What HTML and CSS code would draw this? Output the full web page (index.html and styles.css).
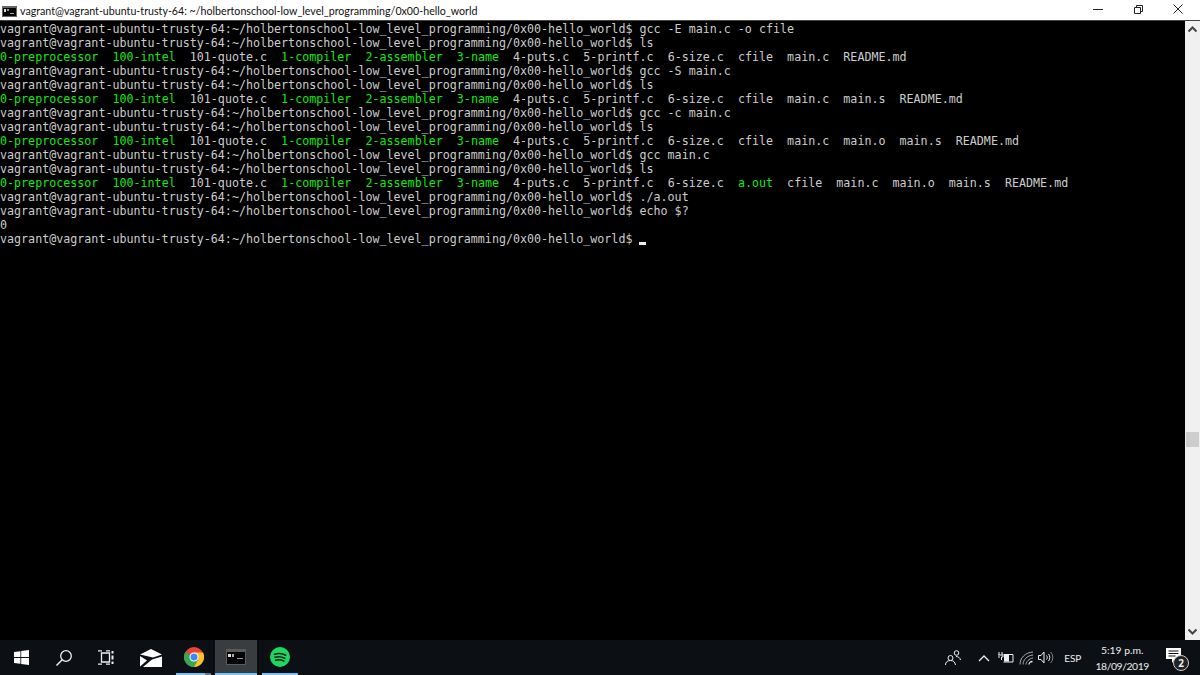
FILE: index.html
```html
<!DOCTYPE html>
<html lang="en">
<head>
<meta charset="utf-8">
<title>Terminal</title>
<link rel="stylesheet" href="styles.css">
</head>
<body>
<div class="screen">
  <header class="titlebar">
    <svg class="app-icon" width="15" height="11" viewBox="0 0 15 11"><rect width="15" height="11" fill="#666"/><rect x="1" y="2" width="13" height="8" fill="#050505"/><rect x="2" y="3" width="2" height="3" fill="#ddd"/><rect x="5" y="3" width="2" height="2" fill="#999"/><rect x="8" y="7" width="4" height="1" fill="#aaa"/></svg>
    <span class="title">vagrant@vagrant-ubuntu-trusty-64: ~/holbertonschool-low_level_programming/0x00-hello_world</span>
    <div class="controls">
      <svg class="ctl" width="40" height="20" viewBox="0 0 40 20"><path d="M15 9.500h10" stroke="#222" fill="none"/></svg>
      <svg class="ctl" width="40" height="20" viewBox="0 0 40 20"><path d="M16.500 7.500h6v6h-6zM18.500 7.500v-2h6v6h-2" stroke="#222" fill="none"/></svg>
      <svg class="ctl" width="40" height="20" viewBox="0 0 40 20"><path d="M15.500 4.500l9 9M24.500 4.500l-9 9" stroke="#222" fill="none"/></svg>
    </div>
  </header>
  <main class="console">
<pre class="term">vagrant@vagrant-ubuntu-trusty-64:~/holbertonschool-low_level_programming/0x00-hello_world$ gcc -E main.c -o cfile
vagrant@vagrant-ubuntu-trusty-64:~/holbertonschool-low_level_programming/0x00-hello_world$ ls
<span class="x">0-preprocessor</span>  <span class="x">100-intel</span>  101-quote.c  <span class="x">1-compiler</span>  <span class="x">2-assembler</span>  <span class="x">3-name</span>  4-puts.c  5-printf.c  6-size.c  cfile  main.c  README.md
vagrant@vagrant-ubuntu-trusty-64:~/holbertonschool-low_level_programming/0x00-hello_world$ gcc -S main.c
vagrant@vagrant-ubuntu-trusty-64:~/holbertonschool-low_level_programming/0x00-hello_world$ ls
<span class="x">0-preprocessor</span>  <span class="x">100-intel</span>  101-quote.c  <span class="x">1-compiler</span>  <span class="x">2-assembler</span>  <span class="x">3-name</span>  4-puts.c  5-printf.c  6-size.c  cfile  main.c  main.s  README.md
vagrant@vagrant-ubuntu-trusty-64:~/holbertonschool-low_level_programming/0x00-hello_world$ gcc -c main.c
vagrant@vagrant-ubuntu-trusty-64:~/holbertonschool-low_level_programming/0x00-hello_world$ ls
<span class="x">0-preprocessor</span>  <span class="x">100-intel</span>  101-quote.c  <span class="x">1-compiler</span>  <span class="x">2-assembler</span>  <span class="x">3-name</span>  4-puts.c  5-printf.c  6-size.c  cfile  main.c  main.o  main.s  README.md
vagrant@vagrant-ubuntu-trusty-64:~/holbertonschool-low_level_programming/0x00-hello_world$ gcc main.c
vagrant@vagrant-ubuntu-trusty-64:~/holbertonschool-low_level_programming/0x00-hello_world$ ls
<span class="x">0-preprocessor</span>  <span class="x">100-intel</span>  101-quote.c  <span class="x">1-compiler</span>  <span class="x">2-assembler</span>  <span class="x">3-name</span>  4-puts.c  5-printf.c  6-size.c  <span class="x">a.out</span>  cfile  main.c  main.o  main.s  README.md
vagrant@vagrant-ubuntu-trusty-64:~/holbertonschool-low_level_programming/0x00-hello_world$ ./a.out
vagrant@vagrant-ubuntu-trusty-64:~/holbertonschool-low_level_programming/0x00-hello_world$ echo $?
0
vagrant@vagrant-ubuntu-trusty-64:~/holbertonschool-low_level_programming/0x00-hello_world$ <span class="cursor"> </span></pre>
    <aside class="scrollbar">
      <svg class="arrow" width="15" height="17" viewBox="0 0 15 17"><path d="M3.500 10.500l4-4 4 4" stroke="#444" stroke-width="2" fill="none"/></svg>
      <div class="track"><div class="thumb"></div></div>
      <svg class="arrow" width="15" height="17" viewBox="0 0 15 17"><path d="M3.500 6.500l4 4 4-4" stroke="#444" stroke-width="2" fill="none"/></svg>
    </aside>
  </main>
  <footer class="taskbar">
    <div class="tb-left">
      <div class="slot s-win"><svg width="15" height="15" viewBox="0 0 15 15"><path d="M0 2.100l6.400-.9v5.900H0zM7.200 1.100L15 0v7.100H7.200zM0 7.900h6.400v5.900L0 12.900zM7.200 7.900H15V15l-7.800-1.100z" fill="#fff"/></svg></div>
      <div class="slot s-search"><svg width="18" height="18" viewBox="0 0 18 18"><circle cx="11" cy="7" r="5.300" stroke="#eee" stroke-width="1.300" fill="none"/><path d="M7.200 10.800L1.500 16.500" stroke="#eee" stroke-width="1.500" fill="none"/></svg></div>
      <div class="slot s-view"><svg width="16" height="15" viewBox="0 0 16 15"><path d="M3.500 3h8v9h-8zM0 .8h4M8 .8h4M0 14.200h4M8 14.200h4" stroke="#eee" stroke-width="1.300" fill="none"/><path d="M14.500 1v2.500M14.500 5.500v4M14.500 11.500v2.500" stroke="#eee" stroke-width="2" fill="none"/></svg></div>
      <div class="slot s-mail"><svg width="22" height="18" viewBox="0 0 22 18"><path d="M0 5.500L11 0l11 5.500L13 8.500zM0 7l7 4.500L0 17.500zM22 7.500V18H3l9-7.500z" fill="#fff"/></svg></div>
      <div class="slot s-chrome run"><svg width="20" height="20" viewBox="0 0 20 20"><circle cx="10" cy="10" r="10" fill="#ea4335"/><path d="M10 10L1.300 5A10 10 0 0 0 10 20l4.500-6z" fill="#34a853"/><path d="M10 5.500h9A10 10 0 0 1 10 20l4-7z" fill="#fbc02d"/><circle cx="10" cy="10" r="4.500" fill="#fff"/><circle cx="10" cy="10" r="3.500" fill="#4285f4"/></svg></div>
      <div class="slot s-term run active"><svg width="20" height="16" viewBox="0 0 20 16"><rect width="20" height="16" fill="#5a5a5a"/><rect x="1" y="3" width="18" height="12" fill="#050505"/><rect x="2" y="5" width="3" height="3" fill="#ddd"/><rect x="6" y="5" width="2" height="3" fill="#aaa"/><rect x="11" y="9" width="6" height="1" fill="#999"/></svg></div>
      <div class="slot s-spot run"><svg width="20" height="20" viewBox="0 0 20 20"><circle cx="10" cy="10" r="10" fill="#1ed760"/><path d="M4.500 7.200c4-1.100 8-.8 11.200 1M5 10.300c3.500-.9 7-.6 9.800 1M5.600 13.200c2.900-.7 5.800-.5 8.200.9" stroke="#10221a" stroke-width="1.600" stroke-linecap="round" fill="none"/></svg></div>
    </div>
    <div class="tb-right">
      <svg class="people" width="16" height="15" viewBox="0 0 16 15"><circle cx="5.500" cy="8" r="2.500" stroke="#eee" fill="none"/><path d="M.5 15c0-3 2-4.500 5-4.500s4.500 1.500 5 4.500" stroke="#eee" fill="none"/><circle cx="11.500" cy="3" r="2.300" stroke="#eee" fill="none"/><path d="M11 6.500c2 0 4 1 4.500 3.500" stroke="#eee" fill="none"/></svg>
      <svg class="chev" width="12" height="8" viewBox="0 0 12 8"><path d="M1 7l5-5 5 5" stroke="#eee" stroke-width="1.300" fill="none"/></svg>
      <svg class="power" width="16" height="11" viewBox="0 0 16 11"><path d="M5.500 2.500H15v7.500H5.500" stroke="#eee" fill="none"/><rect x="6" y="3" width="5" height="6.500" fill="#eee"/><path d="M1 0v3M4 0v3M0 3h5v2H3.500v3M0 5h2" stroke="#eee" fill="none"/></svg>
      <svg class="wifi" width="16" height="14" viewBox="0 0 16 14"><path d="M1 13.500C1 7 6 1.500 14 1M4 13.500C4 9 8 4.500 14 4M7 13.500C7 11 10 7.500 14 7" stroke="#aaa" fill="none"/><path d="M10 13.500c0-1.500 1.500-3 3.500-3" stroke="#eee" stroke-width="1.300" fill="none"/></svg>
      <svg class="vol" width="16" height="13" viewBox="0 0 16 13"><path d="M.5 4.500h2.500l3-3.500v11l-3-3.500H.5z" stroke="#eee" fill="none"/><path d="M8.500 4.500c1 1.200 1 2.800 0 4M10.500 3c1.700 2 1.700 5 0 7" stroke="#eee" fill="none"/><path d="M12.500 1c3 3 3 8 0 11" stroke="#888" fill="none"/></svg>
      <span class="lang">ESP</span>
      <div class="clock"><span>5:19 p.m.</span><span class="date">18/09/2019</span></div>
      <div class="notif">
        <svg width="16" height="16" viewBox="0 0 16 16"><path d="M0 0h15v11H9l-3 4v-4H0z" fill="#fff"/><path d="M2.500 3h10M2.500 5.500h10M2.500 8h7" stroke="#111" fill="none"/></svg>
        <span class="badge">2</span>
      </div>
    </div>
  </footer>
</div>
</body>
</html>
```

FILE: styles.css
```css
html, body {
  margin: 0;
  padding: 0;
  background: #000;
}
.screen {
  width: 1200px;
  height: 675px;
  display: flex;
  flex-direction: column;
  overflow: hidden;
}
.titlebar {
  height: 20px;
  flex: none;
  box-sizing: border-box;
  background: #fff;
  display: flex;
  align-items: center;
  padding: 2px 2px 0 2px;
  font: 10.66px/18px Lato, "Liberation Sans", sans-serif;
  color: #111;
}
.app-icon { flex: none; }
.title {
  margin-left: 3px;
  white-space: nowrap;
}
.controls {
  margin-left: auto;
  margin-top: -2px;
  display: flex;
}
.ctl { display: block; }
.console {
  flex: 1;
  min-height: 0;
  display: flex;
  background: #000;
  border-top: 1px solid #444;
}
.term {
  flex: 1;
  margin: 0;
  padding-top: 0.5px;
  font: 11.68px/14.05px "DejaVu Sans Mono", monospace;
  color: #cccccc;
  white-space: pre;
  overflow: hidden;
}
.x { color: #10e810; }
.cursor {
  display: inline-block;
  width: 7px;
  height: 14px;
  background: linear-gradient(to bottom, transparent 10px, #eee 10px, #eee 13px, transparent 13px);
  vertical-align: top;
}
.scrollbar {
  width: 15px;
  flex: none;
  background: #f0f0f0;
  display: flex;
  flex-direction: column;
}
.arrow { display: block; flex: none; }
.track {
  flex: 1;
  position: relative;
}
.thumb {
  position: absolute;
  left: 1px;
  right: 1px;
  top: 394px;
  height: 15px;
  background: #cdcdcd;
}
.taskbar {
  height: 35px;
  flex: none;
  background: #0c1014;
  display: flex;
  justify-content: space-between;
  color: #eee;
}
.tb-left, .tb-right {
  display: flex;
  align-items: center;
}
.slot {
  height: 35px;
  display: flex;
  align-items: center;
  justify-content: center;
  box-sizing: border-box;
}
.s-win { width: 42px; }
.s-search { width: 43px; }
.s-view { width: 41px; }
.s-mail { width: 50px; }
.s-chrome {
  width: 35px;
  margin-right: 4px;
  border-bottom: 2px solid;
  border-image: linear-gradient(to right, #7cc0f0 28px, #5d7f99 28px) 1;
}
.s-term { width: 42px; }
.s-spot { width: 36px; margin-left: 5px; }
.run { border-bottom: 2px solid #7cc0f0; }
.active { background: #3a3d40; }
.people { margin-right: 17px; }
.chev { margin-right: 8px; }
.power { margin-right: 5px; }
.wifi { margin-right: 3px; }
.vol { margin-right: 10px; }
.lang { font: 10px Lato, "Liberation Sans", sans-serif; margin-right: 14px; }
.clock {
  display: flex;
  flex-direction: column;
  align-items: center;
  font: 10.4px/16px Lato, "Liberation Sans", sans-serif;
  margin-right: 17px;
}
.date { letter-spacing: -0.4px; }
.notif {
  position: relative;
  width: 34px;
  height: 20px;
}
.badge {
  position: absolute;
  left: 7px;
  top: 7px;
  width: 14px;
  height: 14px;
  border-radius: 50%;
  border: 1px solid #ccc;
  background: #222;
  font: bold 10px/14px "Open Sans", sans-serif;
  text-align: center;
}
```
